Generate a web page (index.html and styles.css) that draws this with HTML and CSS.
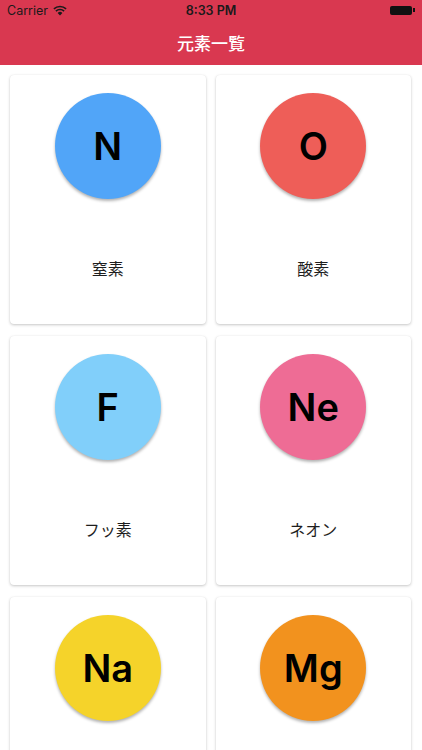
FILE: index.html
```html
<!DOCTYPE html>
<html lang="ja">
<head>
<meta charset="utf-8">
<title>元素一覧</title>
<link rel="stylesheet" href="styles.css">
</head>
<body>
<header class="header">
  <div class="status">
    <div class="status-left">
      <span class="carrier">Carrier</span>
      <svg class="wifi" width="14" height="11" viewBox="0 0 14 11">
        <path d="M7 10.5 L4.6 7.9 A3.4 3.4 0 0 1 9.4 7.9 Z" fill="#1a1a1a"/>
        <path d="M2.9 6.1 A5.9 5.9 0 0 1 11.1 6.1" stroke="#1a1a1a" stroke-width="1.6" fill="none"/>
        <path d="M0.9 3.9 A8.8 8.8 0 0 1 13.1 3.9" stroke="#1a1a1a" stroke-width="1.6" fill="none"/>
      </svg>
    </div>
    <div class="time">8:33 PM</div>
    <div class="status-right">
      <div class="battery"><div class="battery-body"></div><div class="battery-nub"></div></div>
    </div>
  </div>
  <div class="nav">元素一覧</div>
</header>
<main class="grid">
  <div class="card"><div class="circle c-n">N</div><div class="label">窒素</div></div>
  <div class="card"><div class="circle c-o">O</div><div class="label">酸素</div></div>
  <div class="card"><div class="circle c-f">F</div><div class="label">フッ素</div></div>
  <div class="card"><div class="circle c-ne">Ne</div><div class="label">ネオン</div></div>
  <div class="card"><div class="circle c-na">Na</div></div>
  <div class="card"><div class="circle c-mg">Mg</div></div>
</main>
</body>
</html>
```
FILE: styles.css
```css
html, body {
  margin: 0;
  padding: 0;
}
body {
  width: 422px;
  height: 750px;
  overflow: hidden;
  background: #ffffff;
  font-family: "Noto Sans CJK JP", "Liberation Sans", sans-serif;
}
.header {
  background: #d93850;
  height: 65px;
  display: flex;
  flex-direction: column;
}
.status {
  height: 20px;
  display: flex;
  align-items: center;
  justify-content: space-between;
  padding: 0 7px;
  font-family: "Inter", "Liberation Sans", sans-serif;
  font-size: 12.5px;
  color: #1a1a1a;
}
.status-left, .status-right {
  width: 100px;
  display: flex;
  align-items: center;
}
.status-left { gap: 5px; }
.status-right { justify-content: flex-end; }
.time {
  font-weight: 600;
}
.battery {
  display: flex;
  align-items: center;
}
.battery-body {
  width: 22px;
  height: 9px;
  background: #111;
  border-radius: 2px;
}
.battery-nub {
  width: 1.5px;
  height: 4px;
  background: #111;
  margin-left: 1px;
}
.nav {
  flex: 1;
  display: flex;
  align-items: center;
  justify-content: center;
  color: #ffffff;
  font-size: 17px;
  font-weight: 500;
  padding-bottom: 1px;
}
.grid {
  display: grid;
  grid-template-columns: 1fr 1fr;
  column-gap: 10px;
  row-gap: 12px;
  padding: 10px 11px 10px 10px;
}
.card {
  height: 249px;
  background: #ffffff;
  border-radius: 4px;
  box-shadow: 0 1px 3px rgba(0, 0, 0, 0.22), 0 0 1px rgba(0, 0, 0, 0.08);
  display: flex;
  flex-direction: column;
  align-items: center;
  padding-top: 18px;
  box-sizing: border-box;
}
.circle {
  width: 106px;
  height: 106px;
  border-radius: 50%;
  display: flex;
  align-items: center;
  justify-content: center;
  font-family: "Inter", "Liberation Sans", sans-serif;
  font-weight: 600;
  font-size: 38px;
  color: #000000;
  box-shadow: 0 2px 3px rgba(0, 0, 0, 0.3);
}
.c-n { background: #51a5f8; }
.c-o { background: #ee5e58; }
.c-f { background: #81cffa; }
.c-ne { background: #ee6c95; }
.c-na { background: #f5d32a; }
.c-mg { background: #f2921e; }
.label {
  margin-top: 59px;
  font-size: 16px;
  line-height: 20px;
  color: #1e1e1e;
}
```
